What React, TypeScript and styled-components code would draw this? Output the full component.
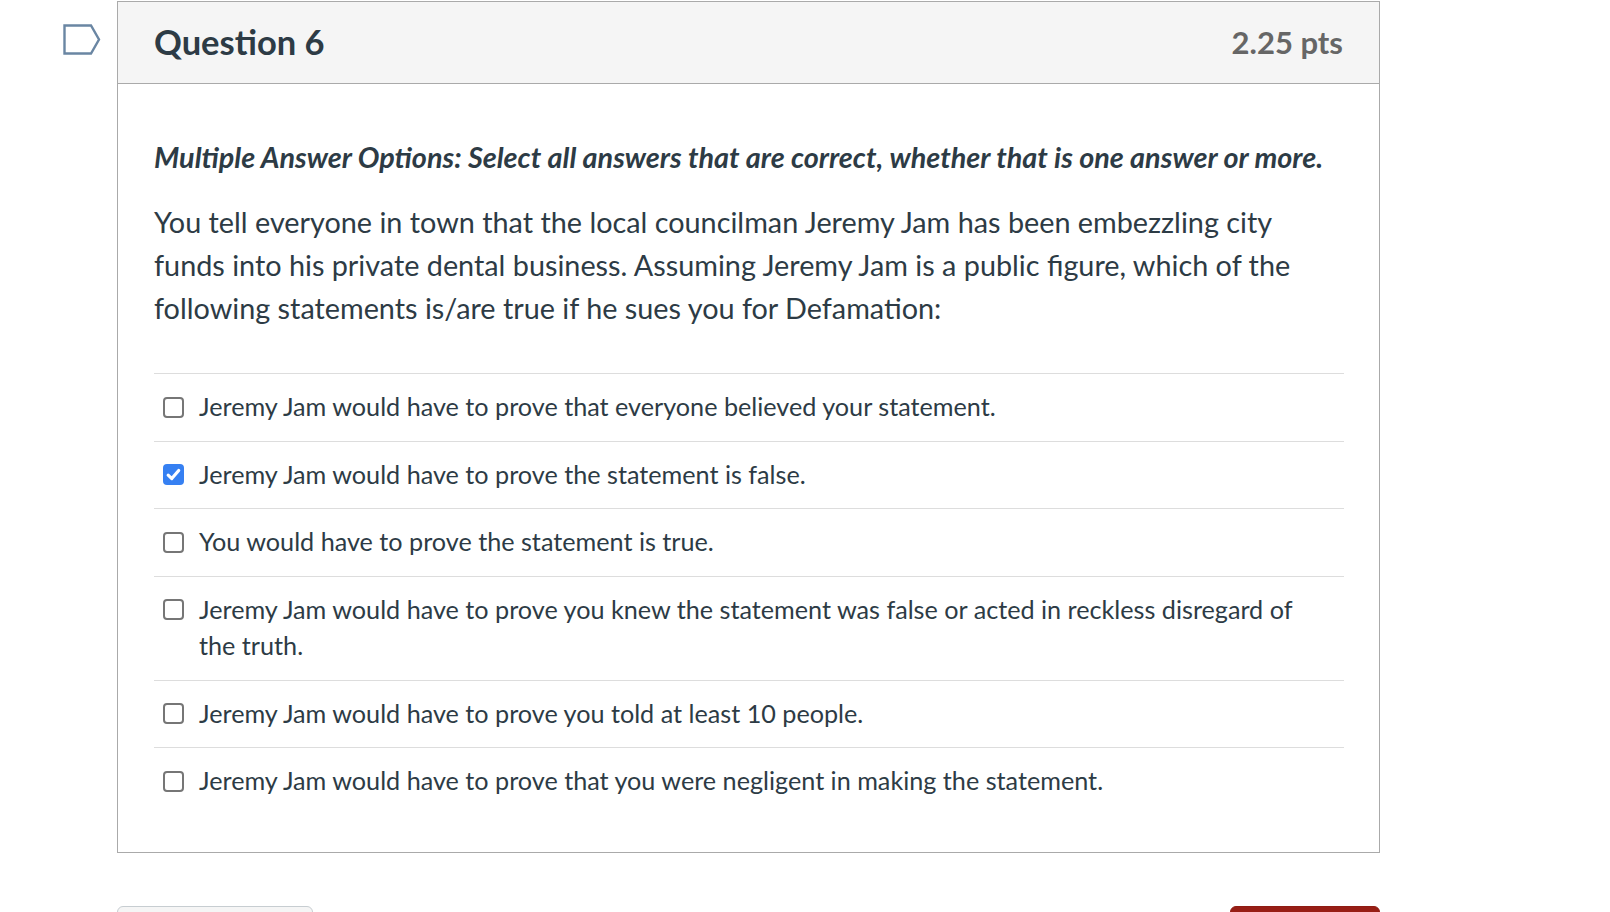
import React from 'react';
import styled, { createGlobalStyle } from 'styled-components';

const GlobalStyle = createGlobalStyle`
  html, body {
    margin: 0;
    padding: 0;
    background: #fff;
  }
  body {
    font-family: Lato, "Open Sans", "Liberation Sans", sans-serif;
    color: #2d3b45;
  }
`;

const Page = styled.div`
  width: 1610px;
  height: 912px;
  overflow: hidden;
  padding-top: 1px;
  box-sizing: border-box;
`;

const QuestionRow = styled.div`
  display: flex;
  align-items: flex-start;
`;

const FlagColumn = styled.div`
  width: 117px;
  flex: none;
  display: flex;
  justify-content: flex-end;
  padding: 23px 16px 0 0;
  box-sizing: border-box;
`;

const Card = styled.section`
  width: 1263px;
  border: 1px solid #aaaaaa;
  box-sizing: border-box;
`;

const Header = styled.header`
  height: 82px;
  background: #f5f5f5;
  border-bottom: 1px solid #aaaaaa;
  box-sizing: border-box;
  display: flex;
  align-items: center;
  justify-content: space-between;
  padding: 0 36px 2px 36px;
`;

const Title = styled.h2`
  margin: 0;
  font-size: 34.5px;
  font-weight: 700;
  color: #2d3b45;
`;

const Points = styled.span`
  font-size: 31px;
  font-weight: 700;
  color: #666666;
`;

const Body = styled.div`
  padding: 52px 35px 37px 36px;
`;

const Instruction = styled.p`
  margin: 0 0 22px;
  font-size: 28.8px;
  line-height: 43px;
  font-weight: 700;
  font-style: italic;
`;

const Prompt = styled.p`
  margin: 0 0 43px;
  font-size: 28.8px;
  line-height: 43px;
  padding-right: 40px;
`;

const Answers = styled.ul`
  list-style: none;
  margin: 0;
  padding: 0;
`;

const Answer = styled.li`
  display: flex;
  align-items: flex-start;
  gap: 15px;
  padding: 14px 0 16px 9px;
  border-top: 1px solid #dddddd;
  font-size: 25.2px;
  line-height: 36.5px;
`;

const Box = styled.span<{ $checked?: boolean }>`
  flex: none;
  width: 21px;
  height: 21px;
  margin-top: 8.5px;
  box-sizing: border-box;
  border-radius: 4px;
  border: ${(p) => (p.$checked ? 'none' : '2px solid #767676')};
  background: ${(p) => (p.$checked ? '#3680f2' : '#fff')};
  display: flex;
  align-items: center;
  justify-content: center;
`;

const AnswerText = styled.span`
  padding-right: 40px;
`;

const Footer = styled.div`
  display: flex;
  justify-content: space-between;
  width: 1263px;
  margin: 53px 0 0 117px;
`;

const NavButton = styled.button<{ $primary?: boolean }>`
  width: ${(p) => (p.$primary ? '150px' : '196px')};
  height: 48px;
  border-radius: 6px;
  border: 1px solid ${(p) => (p.$primary ? '#8e1c13' : '#c7cdd1')};
  background: ${(p) => (p.$primary ? '#981e15' : '#f5f5f5')};
`;

const Flag = () => (
  <svg width="38" height="31" viewBox="0 0 38 31">
    <path
      d="M1.5 1.5 H28 L36 15.5 L28 29.5 H1.5 Z"
      fill="none"
      stroke="#6a86a3"
      strokeWidth="2.4"
      strokeLinejoin="miter"
    />
  </svg>
);

const Check = () => (
  <svg width="17" height="17" viewBox="0 0 16 16">
    <path
      d="M3 8.6 L6.4 11.8 L12.9 4.2"
      fill="none"
      stroke="#fff"
      strokeWidth="3"
      strokeLinecap="round"
      strokeLinejoin="round"
    />
  </svg>
);

const answers = [
  { text: 'Jeremy Jam would have to prove that everyone believed your statement.', checked: false },
  { text: 'Jeremy Jam would have to prove the statement is false.', checked: true },
  { text: 'You would have to prove the statement is true.', checked: false },
  {
    text: 'Jeremy Jam would have to prove you knew the statement was false or acted in reckless disregard of the truth.',
    checked: false,
  },
  { text: 'Jeremy Jam would have to prove you told at least 10 people.', checked: false },
  { text: 'Jeremy Jam would have to prove that you were negligent in making the statement.', checked: false },
];

export default function App() {
  return (
    <Page>
      <GlobalStyle />
      <QuestionRow>
        <FlagColumn>
          <Flag />
        </FlagColumn>
        <Card>
          <Header>
            <Title>Question 6</Title>
            <Points>2.25 pts</Points>
          </Header>
          <Body>
            <Instruction>
              Multiple Answer Options: Select all answers that are correct, whether that is one answer or more.
            </Instruction>
            <Prompt>
              You tell everyone in town that the local councilman Jeremy Jam has been embezzling city funds into
              his private dental business. Assuming Jeremy Jam is a public figure, which of the following
              statements is/are true if he sues you for Defamation:
            </Prompt>
            <Answers>
              {answers.map((a) => (
                <Answer key={a.text}>
                  <Box $checked={a.checked}>{a.checked && <Check />}</Box>
                  <AnswerText>{a.text}</AnswerText>
                </Answer>
              ))}
            </Answers>
          </Body>
        </Card>
      </QuestionRow>
      <Footer>
        <NavButton />
        <NavButton $primary />
      </Footer>
    </Page>
  );
}
